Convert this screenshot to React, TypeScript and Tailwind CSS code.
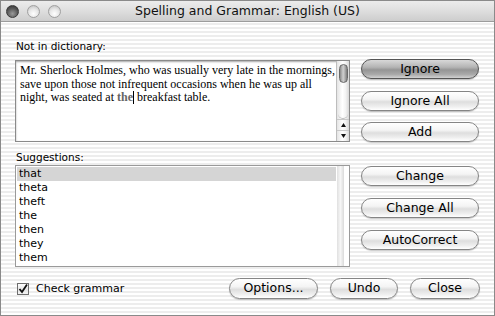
import React from "react";

const sans = "font-['DejaVu_Sans','Noto_Sans',sans-serif]";

function AquaButton({
  label,
  def,
  className,
}: {
  label: string;
  def?: boolean;
  className?: string;
}) {
  return (
    <div
      className={`rounded-full border flex items-center justify-center text-[12.5px] leading-none text-black shadow-[0_1px_1px_rgba(0,0,0,0.2)] ${sans} ${
        def
          ? "border-[#555555] bg-[linear-gradient(180deg,#d8d8d8_0%,#b4b4b4_40%,#959595_55%,#a9a9a9_80%,#d2d2d2_100%)]"
          : "border-[#858585] bg-[linear-gradient(180deg,#ffffff_0%,#f4f4f4_40%,#dedede_55%,#eeeeee_80%,#ffffff_100%)]"
      } ${className ?? ""}`}
    >
      {label}
    </div>
  );
}

function Light({ dark }: { dark?: boolean }) {
  return (
    <div
      className={`w-[13px] h-[13px] rounded-full border ${
        dark
          ? "border-[#3a3a3a] bg-[radial-gradient(circle_at_50%_70%,#9a9a9a_0%,#5a5a5a_55%,#2e2e2e_100%)]"
          : "border-[#a0a0a0] bg-[radial-gradient(circle_at_50%_70%,#ffffff_0%,#e6e6e6_50%,#b8b8b8_100%)]"
      }`}
    />
  );
}

export default function App() {
  const suggestions = ["that", "theta", "theft", "the", "then", "they", "them"];
  return (
    <div className="w-[495px] h-[316px] border border-[#8a8a8a] flex flex-col overflow-hidden bg-[repeating-linear-gradient(180deg,#ffffff_0px,#ffffff_2px,#ededed_2px,#ededed_4px)]">
      {/* title bar */}
      <div className="h-[21px] shrink-0 relative flex items-center border-b border-[#9c9c9c] bg-[linear-gradient(180deg,#ececec_0%,#dedede_50%,#cdcdcd_100%)]">
        <div className="flex items-center gap-[8px] pl-[5px]">
          <Light dark />
          <Light />
          <Light />
        </div>
        <div
          className={`absolute inset-0 flex items-center justify-center text-[12.5px] text-[#111] ${sans}`}
        >
          Spelling and Grammar: English (US)
        </div>
      </div>

      {/* body */}
      <div className="flex flex-col pl-[14px] pr-[14px]">
        {/* top section */}
        <div className="flex mt-[17px]">
          <div className="w-[335px] flex flex-col">
            <div className={`h-[21px] text-[10.5px] leading-[14px] text-black pl-[1px] ${sans}`}>
              Not in dictionary:
            </div>
            <div className="h-[82px] flex border border-[#8a8a8a] bg-white shadow-[inset_0_1px_2px_rgba(0,0,0,0.35)]">
              <div className="flex-1 pl-[4px] pt-[3px] font-['Liberation_Serif',serif] text-[12px] leading-[13.5px] text-black whitespace-nowrap">
                <div>Mr. Sherlock Holmes, who was usually very late in the mornings,</div>
                <div>save upon those not infrequent occasions when he was up all</div>
                <div>
                  night, was seated at{" "}
                  <span className="font-bold text-[#666666]">the</span>
                  <span className="inline-block w-px h-[13px] bg-black align-[-3px]" /> breakfast table.
                </div>
              </div>
              <div className="w-[13px] flex flex-col border-l border-[#bdbdbd] bg-[linear-gradient(90deg,#e4e4e4_0%,#ffffff_45%,#f4f4f4_70%,#d8d8d8_100%)]">
                <div className="mt-[3px] mx-auto w-[9px] h-[19px] rounded-full border border-[#6a6a6a] bg-[linear-gradient(90deg,#8a8a8a_0%,#d0d0d0_45%,#b0b0b0_70%,#7a7a7a_100%)]" />
                <div className="flex-1 mx-[1px] rounded-b-full border-b border-[#bcbcbc]" />
                <div className="h-[11px] flex items-center justify-center border-t border-[#c8c8c8]">
                  <svg width="5" height="4" viewBox="0 0 5 4">
                    <path d="M2.5 0 L5 4 L0 4 Z" fill="#111" />
                  </svg>
                </div>
                <div className="h-[11px] flex items-center justify-center border-t border-[#c8c8c8]">
                  <svg width="5" height="4" viewBox="0 0 5 4">
                    <path d="M0 0 L5 0 L2.5 4 Z" fill="#111" />
                  </svg>
                </div>
              </div>
            </div>
          </div>
          <div className="flex flex-col ml-[11px] w-[118px]">
            <AquaButton label="Ignore" def className="h-[20px] mt-[20px]" />
            <AquaButton label="Ignore All" className="h-[20px] mt-[12px]" />
            <AquaButton label="Add" className="h-[20px] mt-[11px]" />
          </div>
        </div>

        {/* middle section */}
        <div className="flex">
          <div className="w-[335px] flex flex-col">
            <div className={`mt-[8px] h-[14px] text-[10.5px] leading-[14px] text-black pl-[1px] ${sans}`}>
              Suggestions:
            </div>
            <div className="mt-[1px] h-[102px] flex border border-[#9a9a9a] bg-white">
              <div className="flex-1 flex flex-col pt-[1px] pl-[1px]">
                {suggestions.map((s, i) => (
                  <div
                    key={s}
                    className={`h-[14px] pl-[2px] text-[11px] leading-[14px] text-black ${sans} ${
                      i === 0 ? "bg-[#d5d5d5]" : ""
                    }`}
                  >
                    {s}
                  </div>
                ))}
              </div>
              <div className="w-[13px] flex">
                <div className="w-[7px] ml-[1px] bg-[linear-gradient(90deg,#e0e0e0_0%,#f6f6f6_50%,#dadada_100%)]" />
              </div>
            </div>
          </div>
          <div className="flex flex-col ml-[11px] w-[118px]">
            <AquaButton label="Change" className="h-[20px] mt-[24px]" />
            <AquaButton label="Change All" className="h-[20px] mt-[12px]" />
            <AquaButton label="AutoCorrect" className="h-[20px] mt-[12px]" />
          </div>
        </div>

        {/* bottom row */}
        <div className="flex items-center mt-[11px] h-[21px]">
          <div className="ml-[2px] w-[12px] h-[12px] border border-[#6e6e6e] bg-[linear-gradient(180deg,#ffffff_0%,#e4e4e4_60%,#f4f4f4_100%)] flex items-center justify-center">
            <svg width="10" height="10" viewBox="0 0 10 10">
              <path d="M1.5 5 L4 8 L9 0.5" stroke="#111" strokeWidth="1.8" fill="none" />
            </svg>
          </div>
          <div className={`ml-[7px] text-[11px] leading-none text-black ${sans}`}>Check grammar</div>
          <div className="ml-auto flex items-center">
            <AquaButton label="Options..." className="h-[21px] w-[89px]" />
            <AquaButton label="Undo" className="h-[21px] w-[68px] ml-[12px]" />
            <AquaButton label="Close" className="h-[21px] w-[70px] ml-[12px]" />
          </div>
        </div>
      </div>
    </div>
  );
}
